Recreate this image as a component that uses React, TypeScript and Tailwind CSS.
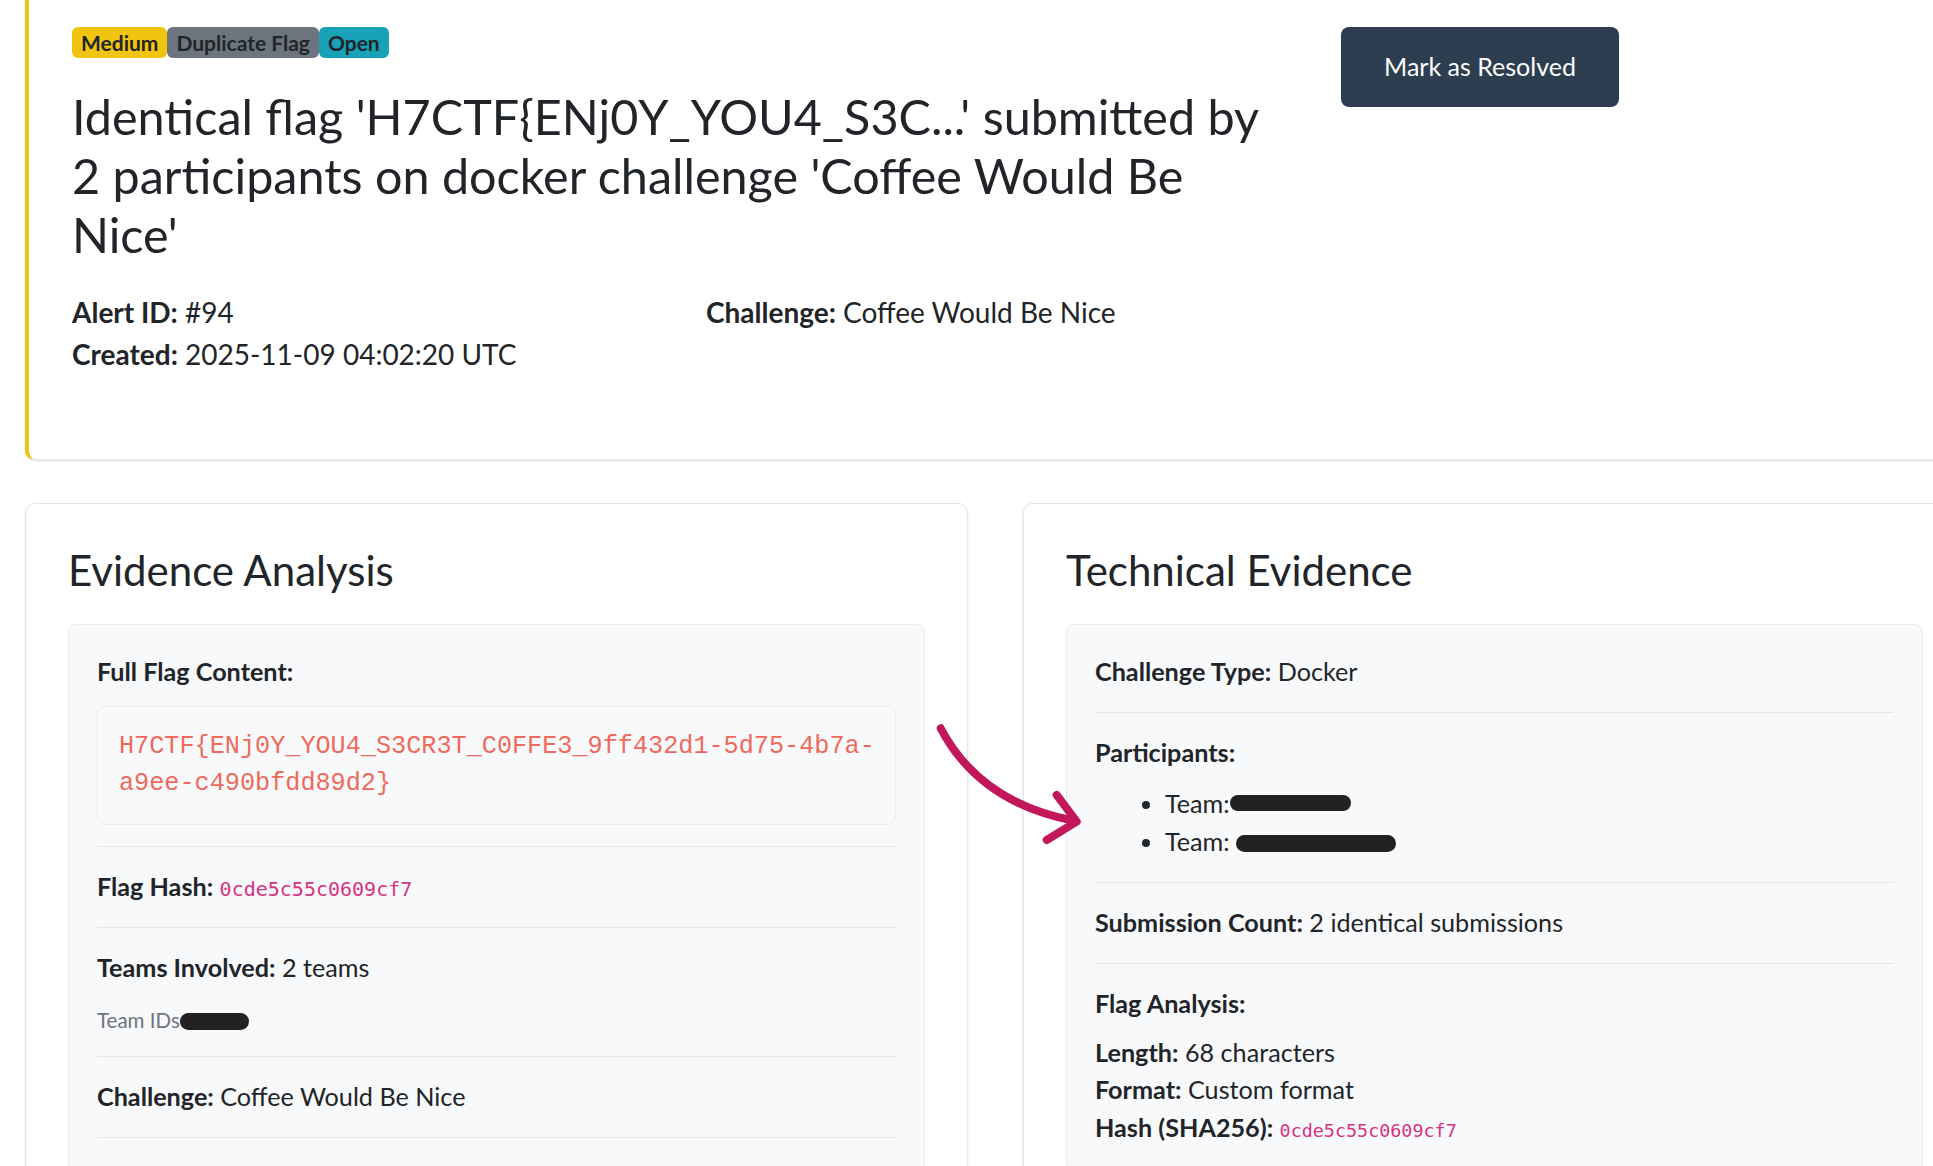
import React from "react";

const Row = ({
  children,
  className = "",
}: {
  children: React.ReactNode;
  className?: string;
}) => (
  <div className={`border-b border-[#e3e6ea] py-[21px] ${className}`}>
    {children}
  </div>
);

const Blob = ({ className = "" }: { className?: string }) => (
  <span className={`inline-block rounded-full bg-[#222] ${className}`} />
);

const App = () => {
  return (
    <div className="relative h-[1166px] w-[1933px] overflow-hidden bg-white font-['Lato',sans-serif] text-[#212529]">
      <div className="-mt-[15px] ml-[25px] w-[1941px]">
        {/* Alert header */}
        <div className="flex rounded-[10px] border border-l-4 border-[#e6e6e6] border-l-[#f1c40f] bg-white pb-[84px] pl-[43px] pr-[42px] pt-[41px] shadow-sm">
          <div className="w-[1269px]">
            <div className="flex h-[31px] text-[21px] font-bold leading-none text-[#212529]">
              <span className="flex items-center rounded-[6px] bg-[#f1c40f] px-[9px]">Medium</span>
              <span className="flex items-center rounded-[6px] bg-[#6c757d] px-[9px]">Duplicate Flag</span>
              <span className="flex items-center rounded-[6px] bg-[#17a2b8] px-[9px]">Open</span>
            </div>
            <h1 className="mt-[29px] w-[1210px] text-[48.5px] font-normal leading-[1.212]">
              Identical flag 'H7CTF{"{"}ENj0Y_YOU4_S3C...' submitted by 2 participants on docker challenge 'Coffee Would Be Nice'
            </h1>
            <div className="mt-[28px] grid grid-cols-[634px_634px] text-[28px] leading-[1.5]">
              <div>
                <p>
                  <b>Alert ID:</b> #94
                </p>
                <p>
                  <b>Created:</b> 2025-11-09 04:02:20 UTC
                </p>
              </div>
              <div>
                <p>
                  <b>Challenge:</b> Coffee Would Be Nice
                </p>
              </div>
            </div>
          </div>
          <button className="h-[80px] w-[278px] self-start rounded-[8px] bg-[#2c3e50] text-[25px] text-white">
            Mark as Resolved
          </button>
        </div>

        {/* Evidence cards */}
        <div className="mt-[43px] grid grid-cols-2 gap-[55px]">
          <div className="rounded-[10px] border border-[#e6e6e6] bg-white px-[42px] pt-[41px] shadow-sm">
            <h2 className="text-[42px] font-normal leading-[1.2]">Evidence Analysis</h2>
            <div className="mt-[28px] rounded-[8px] border border-[#e9ecef] bg-[#f8f9fa] px-[28px] pt-[28px] text-[25.2px] leading-[1.5]">
              <Row className="!pt-0">
                <p className="font-bold">Full Flag Content:</p>
                <div className="mt-[15px] rounded-[8px] border border-[#e9ecef] bg-[#f8f9fa] p-[21px] font-['Liberation_Mono',monospace] text-[25.2px] leading-[1.5] text-[#ee6a5c]">
                  <div className="whitespace-pre">H7CTF{"{"}ENj0Y_YOU4_S3CR3T_C0FFE3_9ff432d1-5d75-4b7a-</div>
                  <div className="whitespace-pre">a9ee-c490bfdd89d2{"}"}</div>
                </div>
              </Row>
              <Row>
                <b>Flag Hash:</b>{" "}
                <code className="font-['DejaVu_Sans_Mono',monospace] text-[20px] text-[#d63384]">
                  0cde5c55c0609cf7
                </code>
              </Row>
              <Row className="!pb-[22px]">
                <p>
                  <b>Teams Involved:</b> 2 teams
                </p>
                <p className="mt-[19px] text-[20.5px] leading-[1.4] text-[#6c757d]">
                  Team IDs<Blob className="h-[17px] w-[69px] align-[-2px]" />
                </p>
              </Row>
              <Row>
                <b>Challenge:</b> Coffee Would Be Nice
              </Row>
              <Row>
                <b>Detection:</b> Identical flag submissions
              </Row>
            </div>
          </div>

          <div className="rounded-[10px] border border-[#e6e6e6] bg-white px-[42px] pt-[41px] shadow-sm">
            <h2 className="text-[42px] font-normal leading-[1.2]">Technical Evidence</h2>
            <div className="mt-[28px] rounded-[8px] border border-[#e9ecef] bg-[#f8f9fa] px-[28px] pt-[28px] text-[25.2px] leading-[1.5]">
              <Row className="!pt-0">
                <b>Challenge Type:</b> Docker
              </Row>
              <Row>
                <p className="font-bold">Participants:</p>
                <ul className="mt-[14px] list-disc pl-[70px]">
                  <li>
                    Team:<Blob className="h-[16px] w-[121px] align-[2px]" />
                  </li>
                  <li>
                    Team: <Blob className="h-[17px] w-[160px] align-[-1px]" />
                  </li>
                </ul>
              </Row>
              <Row>
                <b>Submission Count:</b> 2 identical submissions
              </Row>
              <Row>
                <p className="font-bold">Flag Analysis:</p>
                <div className="mt-[11px]">
                  <p>
                    <b>Length:</b> 68 characters
                  </p>
                  <p>
                    <b>Format:</b> Custom format
                  </p>
                  <p>
                    <b>Hash (SHA256):</b>{" "}
                    <code className="font-['DejaVu_Sans_Mono',monospace] text-[18.4px] text-[#d63384]">
                      0cde5c55c0609cf7
                    </code>
                  </p>
                </div>
              </Row>
            </div>
          </div>
        </div>
      </div>

      {/* annotation arrow */}
      <svg
        className="pointer-events-none absolute left-[930px] top-[718px] h-[135px] w-[160px]"
        viewBox="0 0 160 135"
        fill="none"
      >
        <path
          d="M10.7 10.3 Q50 85 145 103"
          stroke="#c2185b"
          strokeWidth="8"
          strokeLinecap="round"
        />
        <path
          d="M126.7 77 L146.7 103.7 L116.7 122"
          stroke="#c2185b"
          strokeWidth="8"
          strokeLinecap="round"
          strokeLinejoin="round"
        />
      </svg>
    </div>
  );
};

export default App;
